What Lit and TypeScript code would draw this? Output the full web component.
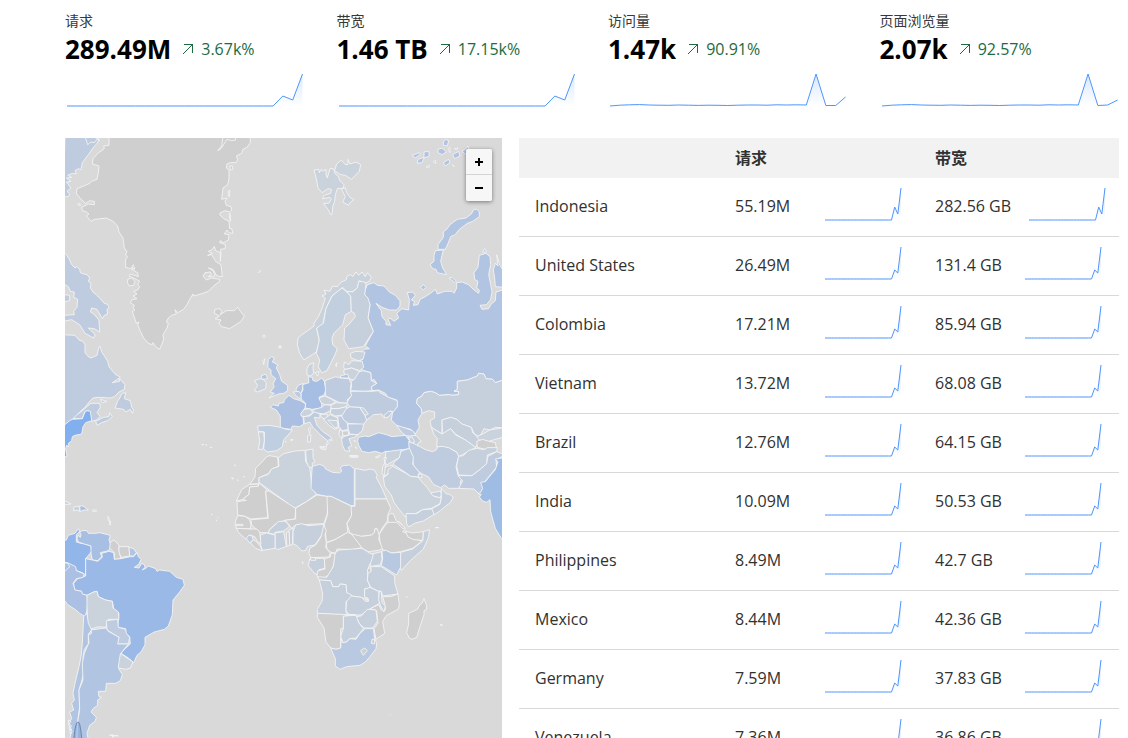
import { LitElement, html, svg, css } from "lit";
import { customElement, property } from "lit/decorators.js";

const NONE = "#cfcfcf";
const PALE = "#cad2dc";
const SOFT = "#c6cfdc";
const LIGHT = "#bfcbde";
const MID = "#b1c4e1";
const DEEP = "#a8bfe3";

type Sheet = { x: number; y: number; shapes: [string, string][] };

// Each sheet holds a part of the world, drawn at three units to the map unit.
const sheets: Sheet[] = [
  { x: 0, y: 0, shapes: [
    [LIGHT, "0,-5 90,-5 102,5 96,16 84,30 70,50 52,74 48,95 40,92 30,98 34,108 22,106 8,112 20,118 4,120 18,130 4,132 18,150 6,160 14,168 10,176 -5,176"],
    [LIGHT, "68,20 78,12 88,14 96,4 104,6 84,-5 60,-5"],
    [NONE, "132,-5 132,22 116,24 118,32 100,45 84,62 82,78 102,84 100,104 96,124 80,130 74,136 56,144 36,152 34,166 48,184 62,196 74,188 88,190 88,200 70,198 50,208 52,218 64,222 72,228 64,234 78,250 88,244 100,243 124,240 144,250 158,264 162,282 174,300 178,330 186,340 182,350 188,358 182,362 182,388 196,392 206,380 200,396 210,388 206,398 218,404 220,416 196,408 192,414 214,424 224,430 218,440 224,446 218,456 206,460 216,468 204,474 216,482 200,486 196,494 208,502 204,510 210,516 202,520 214,556 222,552 218,560 226,580 236,600 250,616 262,620 264,614 272,626 284,634 290,620 296,604 294,590 306,570 310,556 304,552 310,540 320,532 334,528 330,515 338,524 356,514 366,500 374,484 384,468 386,474 394,472 414,466 430,460 448,442 464,430 464,424 440,420 424,426 414,414 420,404 436,402 440,410 430,416 450,414 444,398 430,390 444,394 456,414 472,416 468,380 454,372 448,364 440,350 428,352 442,346 430,340 440,336 448,326 452,338 466,344 466,370 468,350 466,334 480,332 482,320 464,314 466,308 476,314 490,306 492,290 478,288 486,276 492,284 504,286 500,272 494,272 492,250 476,242 464,230 466,224 480,218 494,222 500,216 498,206 484,202 480,190 486,180 470,184 474,150 488,140 492,122 492,96 484,90 486,78 496,74 514,74 518,64 514,54 530,46 534,34 546,28 556,14 556,-5"],
    [NONE, "474,-5 470,24 458,38 468,32 486,4 500,8 512,6 510,-5"],
    [NONE, "494,84 502,84 504,94 496,96"],
    [NONE, "490,160 494,156 494,176 490,174"],
    [NONE, "492,228 496,226 496,250"],
    [NONE, "188,424 200,420 210,430 206,442 194,444 188,436"],
    [NONE, "450,514 464,512 470,520 466,530 484,518 508,518 518,508 526,520 538,534 528,550 510,562 494,572 470,566 462,556 468,546 450,542 464,534 448,526"],
    [NONE, "580,404 587,398"],
    [NONE, "38,198 44,196 46,202 40,202"],
    [LIGHT, "-5,340 4,350 12,362 20,380 30,390 36,386 44,394 46,404 56,408 66,410 74,420 70,430 78,436 76,450 84,462 98,474 118,496 126,498 132,506 126,516 128,528 118,532 112,542 96,514 80,510 76,522 86,528 102,546 104,582 88,572 70,570 90,590 86,600 60,586 44,560 20,545 -5,550 -5,532 28,530 26,520 36,508 38,484 26,478 28,462 16,460 10,446 0,440 -5,440"],
    [LIGHT, "-5,470 14,472 14,488 -5,492"],
    [NONE, "594,592 600,592 600,598 594,598"],
    [NONE, "642,624 648,624 648,630 642,630"],
  ]},
  { x: 0, y: 182, shapes: [
    [LIGHT, "-5,44 30,46 42,60 54,64 60,74 60,98 70,110 78,114 96,106 102,80 106,80 110,96 122,114 128,124 132,140 150,162 166,172 142,188 164,184 164,176 180,194 178,208 162,216 148,230 136,234 100,232 84,234 74,244 60,262 44,276 30,294 -5,318"],
    [LIGHT, "24,296 36,284 50,274 78,250 104,250 106,262 96,278 106,290 94,300 80,304 76,290 70,272 60,274 52,296"],
    [LIGHT, "92,304 116,292 132,290 134,278 142,290 128,302 110,308 96,316"],
    [LIGHT, "172,220 182,218 178,236 196,242 200,262 206,270 202,280 196,268 182,276 176,268 150,264 158,244"],
    [LIGHT, "106,238 126,244 112,248"],
    ["#82afed", "-5,318 14,302 22,298 52,296 60,276 66,272 76,274 80,302 62,308 54,320 50,342 30,346 22,350 20,362 10,370 12,380 4,376 2,388 6,408 -5,412"],
    [PALE, "-5,546 4,544 18,552 -5,554"],
    [SOFT, "26,562 42,558 44,574 34,570 26,572"],
    [DEEP, "44,558 54,558 70,570 54,570 46,576"],
    [SOFT, "82,570 94,570 94,574 84,574"],
    [PALE, "128,590 130,590 134,602 130,602"],
    [PALE, "134,606 137,606 136,610"],
    [PALE, "410,374 416,374"], [PALE, "422,374 426,376"], [PALE, "436,382 441,383"],
    [PALE, "438,584 442,584"], [PALE, "458,592 460,594"], [PALE, "501,472 501,475"],
  ]},
  { x: 0, y: 382, shapes: [
    ["#92b5ea", "-5,62 4,60 10,46 30,40 40,26 44,34 34,44 34,66 48,70 60,72 78,78 80,94 62,116 62,166 52,158 34,152 30,142 -5,126"],
    ["#a7bfe3", "44,36 52,32 66,32 70,40 92,40 104,38 120,42 136,46 132,60 134,66 140,78 130,92 106,98 110,110 98,122 82,120 78,100 78,78 58,72 40,66 36,56 40,46 46,52 48,44"],
    [NONE, "136,66 148,60 162,76 162,92 168,116 148,118 148,98 134,84"],
    [NONE, "162,80 192,80 194,108 168,112 162,96"],
    [MID, "192,82 206,86 214,98 206,108 194,108"],
    ["#9bb9e6", "62,116 82,120 98,124 112,112 110,100 132,94 146,98 148,118 168,116 196,110 206,110 216,98 220,110 228,118 222,132 208,142 222,144 230,130 238,134 240,142 232,150 244,144 250,138 272,146 276,154 284,150 314,154 334,172 354,178 358,196 344,216 324,240 322,284 310,318 298,328 268,336 240,352 240,374 228,396 216,406 206,428 190,414 168,400 180,386 196,372 194,350 182,340 182,326 158,322 162,280 146,266 142,244 122,240 100,230 96,214 86,216 66,226 50,222 50,214 28,210 26,190 38,176 62,168"],
    ["#abc0e2", "-5,126 8,128 32,140 34,152 58,162 54,172 34,176 24,190 30,210 50,214 52,222 66,226 68,246 66,270 60,290 44,280 30,268 8,254 -5,236"],
    ["#abc0e2", "-5,128 8,130 14,140 2,152 -5,154"],
    [PALE, "66,226 86,216 96,214 100,230 122,240 142,244 144,264 160,276 162,298 130,298 122,322 100,320 76,328 68,308 66,256"],
    [LIGHT, "124,302 158,298 160,322 182,328 184,340 194,352 190,372 156,372 162,352 126,330"],
    [PALE, "166,400 204,426 196,444 182,448 160,444 158,430"],
    [MID, "56,290 66,280 70,310 80,330 70,342 70,372 58,388 54,410 56,460 48,490 42,510 44,560 38,606 34,660 14,660 20,630 10,610 20,596 14,576 26,570 20,550 28,540 24,520 30,490 42,440 48,410 52,370"],
    [MID, "78,330 122,324 130,334 162,352 158,372 190,372 166,402 160,440 162,448 172,464 166,482 152,490 124,490 122,514 100,514 102,530 110,532 98,540 98,556 84,566 78,576 94,592 90,604 74,616 66,640 70,660 36,660 38,606 44,570 42,510 54,480 52,430 58,400 72,368 70,346 80,340"],
    [PALE, "10,600 18,604 12,612 20,618 14,626 22,634 16,642"],
    [PALE, "134,646 144,644 142,652 152,646 160,648"],
    [PALE, "134,2 136,8"], [PALE, "132,12 138,14"], [PALE, "453,1 456,1"],
  ]},
  { x: 217, y: 0, shapes: [
    [PALE, "96,96 110,94 112,104 118,94 122,100 132,94 132,110 136,120 144,92 154,92 160,108 170,116 172,126 186,140 184,150 166,152 160,170 158,190 152,206 150,230 146,230 138,214 124,196 140,196 148,184 144,178 122,182 126,172 146,166 148,154 138,152 120,164 108,150 104,126 100,110"],
    [PALE, "158,98 164,78 178,66 190,80 198,80 198,64 204,78 222,72 236,80 232,100 208,124 190,112 176,110 160,100"],
    [PALE, "178,152 190,150 194,164 206,180 216,184 204,194 200,202 182,192 190,176"],
    [MID, "390,52 412,44 416,48 400,60"],
    [MID, "426,42 440,40 442,54 432,58 426,60 420,74 406,76 408,64 426,58"],
    [MID, "484,12 490,4 500,8 496,24 484,22"],
    [MID, "468,34 480,30 494,42 480,50 468,44"],
    [MID, "512,50 530,40 534,54 518,62"],
    [MID, "540,40 552,32 558,24 562,40 550,48"],
    [MID, "454,72 460,66 462,76"],
    [MID, "484,74 500,64 504,74 490,84"],
    [MID, "432,86 442,82 440,90"], [MID, "498,32 504,28 504,44"], [MID, "518,32 528,30 524,36"], [MID, "512,80 516,86"],
    [MID, "576,214 584,214 592,222 592,236 572,250 556,256 548,262 530,276 520,290 506,296 500,312 490,334 468,334 468,320 484,298 484,282 496,272 504,260 526,244 552,240 568,228"],
    [MID, "460,338 484,336 480,352 476,370 482,390 494,410 466,404 462,394 452,392 444,380 456,370 456,352"],
    [MID, "416,448 424,440 432,448 424,456"],
    [MID, "502,420 510,418 522,430 518,434"],
    [MID, "602,342 608,332 614,342"],
    [MID, "634,396 640,376 648,384 644,350 652,378 660,392 670,380 670,448 640,446 638,420"],
    [MID, "248,460 256,440 276,434 286,442 306,444 322,462 340,472 354,488 354,504 344,516 322,516 300,508 282,496 298,518 300,536 312,550 312,560 326,562 318,544 324,540 336,550 350,540 344,526 360,512 380,516 382,486 376,464 392,462 400,472 388,486 398,490 394,502 408,500 414,484 430,476 448,464 460,454 466,468 488,460 510,460 516,466 524,450 524,434 540,432 560,440 576,456 590,466 592,456 584,450 588,430 578,424 576,404 588,388 592,352 612,346 624,356 626,380 620,410 626,440 630,462 626,484 614,500 594,502 600,514 620,512 626,500 640,488 642,462 670,454 670,724 640,734 632,724 612,722 606,708 590,706 586,714 556,726 526,730 526,754 516,760 530,760 530,770 512,772 502,770 472,772 460,764 446,760 426,764 420,774 406,782 404,796 418,812 420,826 408,846 412,868 400,888 386,874 360,868 344,862 328,846 332,822 346,806 344,786 318,778 310,766 290,756 270,758 268,746 284,736 276,724 268,728 266,704 240,696 236,660 238,642 246,634 262,632 250,624 274,580 258,540 264,500 248,470"],
    [PALE, "48,600 60,590 80,576 96,564 96,556 108,538 120,512 130,480 120,474 132,468 126,456 144,460 152,444 166,446 178,432 192,426 196,414 206,410 212,416 222,402 230,412 240,402 250,416 256,404 268,418 262,430 248,436 232,428 226,450 210,462 194,460 182,448 150,474 132,512 122,560 104,570 112,610 103,642 91,650 65,666 53,646 46,620"],
    ["#c2cfde", "132,512 150,474 180,450 194,462 206,474 208,520 190,530 182,560 156,586 150,600 152,620 166,632 160,648 146,676 135,698 119,704 109,686 113,666 103,646 112,606 104,570 124,556"],
    [SOFT, "194,460 212,462 226,450 230,430 248,432 252,440 248,470 258,480 264,500 258,540 274,580 244,626 200,632 186,606 188,570 200,560 220,536 218,526 208,520 206,474"],
  ]},
  { x: 160, y: 202, shapes: [
    [PALE, "376,40 392,34 420,36 414,58 400,62 378,54"],
    [PALE, "356,82 358,66 372,74 380,62 412,64 416,82 404,92 380,84 360,88"],
    [PALE, "356,90 380,84 404,94 400,108 386,120 372,116 358,102"],
    [LIGHT, "378,124 388,118 402,96 414,92 437,98 439,122 455,130 439,140 441,152 420,154 376,152 380,140"],
    [MID, "346,108 368,102 372,114 348,114"],
    [LIGHT, "300,122 332,110 346,114 372,116 378,130 376,150 380,166 366,180 370,190 344,188 320,176 302,168 300,148"],
    ["#a7bee4", "250,110 262,112 264,122 276,124 290,114 298,124 302,150 298,164 282,172 290,190 290,204 262,208 240,204 242,190 228,176 228,160 234,150 232,134 252,128"],
    [PALE, "246,86 252,74 266,68 264,84 266,100 256,108 246,104"], [PALE, "270,98 282,94 278,108"],
    [MID, "212,150 220,136 234,130 232,150 226,162"], [LIGHT, "204,156 222,154 228,162 228,178 216,170"],
    ["#aabfe1", "166,264 166,228 154,210 136,202 144,194 160,198 162,190 176,188 178,180 192,166 206,176 226,182 242,192 240,204 228,220 234,230 236,252 224,260 202,258 198,268 184,266"],
    ["#bfcee0", "98,258 132,256 166,262 184,268 202,270 192,282 176,300 172,320 156,332 126,336 116,326 118,300 118,276 100,274"],
    [PALE, "100,276 116,276 118,300 114,328 100,328 104,302"],
    [MID, "130,58 140,50 148,54 142,66 158,74 154,84 164,104 170,124 188,136 188,152 176,160 160,162 132,174 148,160 136,156 148,140 144,132 152,116 138,104 138,90 128,82"],
    [PALE, "104,116 114,118 124,128 122,146 98,156 88,152 98,136 88,122"], [MID, "108,108 122,102 128,116 112,118"],
    [PALE, "114,62 120,56 116,74"], [PALE, "162,20 168,20"], [PALE, "332,74 336,68 334,80"],
    [PALE, "228,220 238,208 254,206 264,218 252,226 240,230 228,228"],
    [LIGHT, "262,210 290,202 300,194 320,196 316,212 296,222 270,218"],
    [PALE, "282,174 300,168 320,178 332,186 318,194 300,194 288,188"],
    [PALE, "318,196 334,188 368,190 364,200 340,206 318,206"],
    [SOFT, "318,206 340,206 364,200 364,214 350,226 330,228 316,220"],
    [LIGHT, "236,230 254,228 268,216 286,222 284,234 268,232 276,256 292,274 316,290 322,302 312,298 312,308 304,318 308,302 288,286 264,262 254,246 238,252"],
    [LIGHT, "284,320 304,320 302,330 288,326"], [PALE, "248,286 258,284 256,306 248,306"], [MID, "250,266 256,262 254,280"],
    [PALE, "196,300 204,298 202,302"], [PALE, "180,304 184,306"],
    [PALE, "284,224 306,222 308,236 294,236"], [SOFT, "296,238 316,224 338,234 342,262 330,268 312,256"],
    [PALE, "308,240 336,242 340,260 330,264"],
    [LIGHT, "338,228 350,228 366,246 370,268 352,272 342,260"], [PALE, "344,268 354,276 350,296 342,284"], [NONE, "352,274 368,272 372,284 354,288"],
    [LIGHT, "350,228 364,206 376,200 404,202 420,222 425,240 415,254 370,250 356,240"],
    [LIGHT, "368,252 416,252 412,272 398,284 374,282 370,266"],
    [LIGHT, "376,154 441,154 461,152 465,158 491,172 517,182 517,200 503,218 497,212 487,232 475,232 471,222 445,224 436,232 425,240 418,222 404,202 376,200 366,190 370,180 380,166"],
    [LIGHT, "477,226 491,214 503,214 491,230 479,234"],
    [PALE, "404,202 416,204 430,222 420,226"],
    [LIGHT, "350,298 356,290 376,284 400,284 388,292 372,296 380,318 370,322 374,334 360,332 352,314"],
    [PALE, "374,348 400,348 398,352 376,352"], [PALE, "386,302 392,304"], [PALE, "392,320 394,326"], [PALE, "451,352 465,346 459,354"],
    ["#a9bfe2", "400,292 420,288 431,290 461,278 485,284 501,290 541,286 553,302 553,326 527,330 507,336 481,334 471,340 451,334 431,338 411,334 402,318 398,304"],
  ]},
  { x: 297, y: 202, shapes: [
    [LIGHT, "104,256 130,264 152,272 162,286 150,292 130,286 118,276"],
    [SOFT, "140,288 162,286 178,304 170,308 164,320 150,306 142,300"],
    [SOFT, "140,296 150,290 158,306 148,310"],
    [SOFT, "430,118 400,128 392,118 372,116 366,102 350,100 346,108 316,120 286,124 286,148 276,154 290,154 290,164 272,166 262,164 232,166 220,158 206,154 186,158 180,168 166,176 164,190 178,206 180,220 200,212 218,216 218,234 204,242 208,262 240,282 240,240 266,232 284,238 300,252 328,262 336,280 352,292 366,266 384,270 400,262 430,264"],
    [SOFT, "242,282 240,240 266,232 284,238 300,252 328,262 332,278 346,290 360,284 372,292 354,302 340,322 310,300 280,282 266,266 246,282"],
    [PALE, "208,262 224,272 240,282 266,266 280,284 310,300 342,322 320,334 290,350 284,336 260,324 224,320 226,296 216,284"],
    [PALE, "344,290 362,282 384,270 430,262 430,290 400,298 380,304 352,300"],
    [NONE, "344,304 362,298 380,304 400,308 404,328 376,330 346,322"],
  ]},
  { x: 297, y: 307, shapes: [
    [LIGHT, "142,10 140,-10 156,-4 176,6 190,14 212,20 224,14 226,6 240,4 260,8 284,22 290,34 282,66 288,90 300,100 294,112 298,120 290,130 260,130 248,120 236,128 214,118 200,96 180,86 170,80 154,60 152,36"],
    [SOFT, "290,34 304,32 320,16 346,10 366,14 376,8 406,8 404,20 376,30 374,56 356,72 330,92 290,90 284,62"],
    [LIGHT, "288,92 330,92 356,72 374,56 378,34 404,20 430,30 402,44 404,66 388,86 370,108 366,138 352,148 336,132 290,130 302,108"],
    ["#9fbde4", "430,38 400,42 408,50 400,74 388,88 370,110 356,112 362,130 356,142 348,146 358,148 352,156 362,168 374,172 384,164 386,200 400,250 418,280 430,290"],
    [LIGHT, "114,20 142,10 154,36 152,58 172,82 168,96 146,94 130,82 94,58 96,52 112,38"],
    [PALE, "72,20 118,14 112,38 74,60 68,50"],
    [NONE, "70,66 92,60 94,72 74,88 64,98"], [PALE, "62,66 70,50 68,92 60,86"], [PALE, "66,38 74,38 68,50"],
    [PALE, "64,98 78,88 78,74 92,64 130,84 146,94 168,96 186,118 196,128 204,140 216,154 238,158 234,176 208,190 182,194 160,206 136,206 130,216 122,206 112,194 96,172 88,150 68,124"],
    [LIGHT, "168,88 178,88 180,98 172,98"],
    [SOFT, "206,144 236,138 238,150 234,158 212,152"],
    [SOFT, "238,130 252,146 262,148 274,156 266,172 250,184 236,196 216,210 208,192 234,178 238,160"],
    [SOFT, "132,206 164,206 182,194 210,192 216,208 184,228 160,234 140,246 134,236"],
    [PALE, "220,248 230,248"],
  ]},
  { x: 160, y: 307, shapes: [
    [NONE, "124,36 132,32 158,36 160,64 140,72 130,86 102,98 102,116 74,118 90,96 92,70 114,48"],
    [NONE, "74,118 100,118 100,124 74,126 72,148 52,164 34,168 50,134"],
    [PALE, "160,38 176,26 210,18 240,16 242,50 254,66 258,100 260,124 274,148 244,170 212,188 200,186 190,176 102,112 102,98 130,88 140,72 162,64"],
    [PALE, "242,16 264,12 264,38 270,50 262,54 262,70 250,64 244,48"],
    ["#b9c9e1", "262,64 284,58 298,64 302,72 322,82 344,84 350,78 346,68 354,62 374,60 388,72 388,182 378,182 318,154 304,154 276,148 258,130 260,90"],
    ["#c8d2de", "390,70 420,76 436,72 449,76 457,92 453,96 471,130 485,162 390,162"],
    [NONE, "36,170 64,166 52,164 72,148 74,126 100,124 102,114 130,138 122,138 128,218 78,222 60,214 38,210"],
    [NONE, "122,138 132,138 190,176 212,190 210,222 180,226 150,238 134,254 130,264 104,262 80,240 78,224 130,220"],
    [NONE, "212,190 244,170 276,150 304,154 312,160 306,210 296,236 212,240 200,250 190,236 180,226 212,222"],
    [NONE, "306,154 318,154 380,184 380,212 366,234 368,262 330,284 304,292 302,268 296,244 308,208"],
    [NONE, "378,184 390,184 390,162 485,162 497,190 489,208 487,228 471,250 461,272 455,250 449,252 449,262 440,270 411,274 390,276 374,262 366,236 380,212"],
    [NONE, "376,266 411,274 440,270 449,262 449,252 457,252 463,272 461,284 475,310 460,316 430,320 411,310 390,290"],
    [NONE, "304,294 330,284 368,262 380,268 411,308 380,314 336,312 332,324 318,322 306,312"],
    [SOFT, "204,296 204,260 212,240 230,236 250,242 296,238 300,258 286,276 270,300 248,304 242,316 230,318 216,302"],
    [NONE, "296,240 304,256 300,270 304,292 302,308 316,324 312,336 258,338 252,326 254,310 272,300 288,276"],
    [SOFT, "192,254 204,250 202,300 194,300"], [NONE, "184,262 192,260 194,300 186,304"],
    [SOFT, "150,264 176,260 184,304 158,314 150,308"], [SOFT, "106,270 124,264 150,270 150,310 112,316 106,296"],
    [SOFT, "134,254 160,230 180,228 194,244 176,258 150,262 148,268 130,264"],
    [NONE, "38,212 60,214 74,224 78,240 76,252 34,250 30,234"], [NONE, "32,238 54,238 54,242 32,242"],
    [NONE, "34,250 76,252 96,252 104,262 108,296 98,290 90,276 76,270 62,282 40,262"],
    [LIGHT, "64,280 72,270 82,274 84,284 74,294"], [NONE, "76,294 86,284 96,292 106,304 112,318 92,310"],
    [SOFT, "254,342 274,340 298,340 300,370 282,374 276,390 264,380 250,362"], [NONE, "256,338 272,338 272,346 258,346"],
    [NONE, "298,342 316,336 318,324 332,326 326,360 316,384 300,398 280,400 276,390 278,378 300,372"],
    [PALE, "232,350 234,356"], [PALE, "28,60 32,62"], [PALE, "22,102 26,100"], [PALE, "36,104 40,106"], [PALE, "56,96 60,94"],
    [PALE, "286,8 300,8 298,14"], [PALE, "374,32 398,32 396,36"],
  ]},
  { x: 297, y: 307, shapes: [
    [NONE, "82,230 112,230 130,252 122,260 132,264 150,280 180,288 152,310 116,320 88,324 62,314 54,290 52,268 70,240"],
    [NONE, "86,206 94,206 102,226 128,246 124,252 104,232 78,232 78,212"],
    [SOFT, "184,260 202,254 200,276 184,312 146,346 118,376 114,366 116,322 152,312 182,288"],
    [NONE, "130,258 150,264 184,260 182,286 156,284 138,276"],
    ["#b7c8e0", "60,318 72,316 88,324 116,322 116,366 104,390 58,362 62,340"],
    [SOFT, "28,328 58,320 60,344 54,360 26,364 24,346"],
  ]},
  { x: 215, y: 422, shapes: [
    [SOFT, "164,-10 166,-22 178,-30 246,-35 270,-20 280,-16 274,4 266,20 264,34 262,60 272,84 254,86 254,112 266,122 244,112 214,108 200,98 198,74 180,72 176,80 158,80 152,62 118,60 112,50 140,52 160,20"],
    [NONE, "262,28 272,22 274,36 264,46"],
    [SOFT, "118,60 152,62 158,80 176,80 180,72 198,74 200,98 214,104 214,122 198,124 198,158 206,166 112,160 112,148 126,124 128,100"],
    [SOFT, "200,124 214,108 244,112 256,124 266,124 264,114 254,112 254,88 270,82 296,94 298,130 268,148 244,164 228,166 204,162 198,150"],
    [SOFT, "264,40 274,34 272,20 304,20 344,48 344,68 354,102 308,108 304,94 296,94 272,82 262,60"],
    [NONE, "308,110 332,110 354,102 358,136 354,148 320,166 308,184 314,220 288,238 282,206 294,190 290,152 270,146 296,134 304,150 316,150 314,130"],
    [SOFT, "298,92 304,96 306,128 316,138 312,156 302,138 296,120"],
    [SOFT, "228,170 244,168 262,148 288,150 292,184 278,204 252,204 238,190"],
    [SOFT, "190,168 228,166 236,188 250,206 228,234 208,236 200,246 188,248 182,230 190,206"],
    [NONE, "112,160 204,164 228,164 190,168 190,204 182,206 182,264 168,268 152,264 138,246 132,204 112,172"],
    ["#b9c9e1", "152,264 168,268 182,264 184,236 188,248 200,246 210,236 228,238 240,220 256,206 280,206 284,236 290,250 288,266 270,290 256,306 240,316 200,320 180,328 166,318 166,296"],
    [NONE, "242,272 254,264 262,272 250,286"], [NONE, "276,238 284,238 284,252 274,250"],
    [NONE, "432,116 440,136 440,148 432,152 432,164 420,200 410,232 396,238 388,234 380,218 386,192 386,160 412,148 420,134 426,130"],
    [PALE, "378,108 382,112"], [PALE, "480,194 488,196"], [PALE, "330,464 332,466"],
  ]},
];

const flat = (n: number, y: number) => Array.from({ length: n }, () => y);
const surge = [...flat(22, 35), 25, 29, 3];
const wave = [35, 34.2, 33.8, 33.6, 34, 34.2, 34.3, 34, 34.2, 34.4, 34.2, 34.3, 34.5, 34.2, 34, 34, 34.2, 33.8, 34, 33.8, 34];
const stats = [
  { label: "请求", value: "289.49M", change: "3.67k%", ys: surge },
  { label: "带宽", value: "1.46 TB", change: "17.15k%", ys: surge },
  { label: "访问量", value: "1.47k", change: "90.91%", ys: [...wave, 3, 34.5, 34.5, 26] },
  { label: "页面浏览量", value: "2.07k", change: "92.57%", ys: [...wave, 3, 34.5, 34, 29] },
];

const rows = [
  ["Indonesia", "55.19M", "282.56 GB"],
  ["United States", "26.49M", "131.4 GB"],
  ["Colombia", "17.21M", "85.94 GB"],
  ["Vietnam", "13.72M", "68.08 GB"],
  ["Brazil", "12.76M", "64.15 GB"],
  ["India", "10.09M", "50.53 GB"],
  ["Philippines", "8.49M", "42.7 GB"],
  ["Mexico", "8.44M", "42.36 GB"],
  ["Germany", "7.59M", "37.83 GB"],
  ["Venezuela", "7.36M", "36.86 GB"],
];

@customElement("spark-line")
class SparkLine extends LitElement {
  @property({ attribute: false }) ys: number[] = [];
  @property({ type: Number }) w = 240;
  @property({ type: Number }) h = 38;

  static styles = css`
    :host { display: block; }
    .chart { display: block; width: 100%; height: 100%; }
    .line { fill: none; stroke: #4e95fb; stroke-width: 1; vector-effect: non-scaling-stroke; }
  `;

  render() {
    const step = (this.w - 4) / (this.ys.length - 1);
    const pts = this.ys.map((y, i) => `${(2 + i * step).toFixed(1)},${y}`).join(" ");
    const base = Math.max(...this.ys);
    return html`<svg class="chart" viewBox="0 0 ${this.w} ${this.h}" preserveAspectRatio="none" aria-hidden="true">
      <defs><linearGradient id="fade" x1="0" y1="0" x2="0" y2="1">
        <stop offset="0" stop-color="#4e95fb" stop-opacity="0.22"></stop>
        <stop offset="1" stop-color="#4e95fb" stop-opacity="0"></stop>
      </linearGradient></defs>
      <polygon fill="url(#fade)" points="2,${base} ${pts} ${this.w - 2},${base}"></polygon>
      <polyline class="line" points=${pts}></polyline>
    </svg>`;
  }
}

@customElement("world-map")
class WorldMap extends LitElement {
  static styles = css`
    :host { display: block; position: relative; background: #d9d9d9; overflow: hidden; }
    .map { display: block; width: 100%; aspect-ratio: 437 / 600; }
    .land { stroke: #f4f4f4; stroke-width: 2.6; stroke-linejoin: round; }
    .ring { fill: #7da3dc; fill-opacity: 0.5; stroke: #6f86ab; stroke-width: 3; }
    .zoom { position: absolute; top: 11px; right: 10px; width: 26px; border-radius: 2px; box-shadow: 0 1px 4px rgba(0, 0, 0, 0.45); overflow: hidden; }
    .btn { display: grid; place-items: center; box-sizing: border-box; width: 100%; height: 26px; padding: 0; border: 0; background: #f7f7f7; cursor: pointer; }
    .btn:first-child { border-bottom: 1px solid #d4d4d4; }
    .sign { display: block; fill: none; stroke: #000; stroke-width: 2; }
  `;

  render() {
    return html`
      <svg class="map" viewBox="0 0 437 600" preserveAspectRatio="xMinYMin slice" role="img" aria-label="World">
        ${sheets.map((s) => svg`<g transform="translate(${s.x} ${s.y}) scale(0.33333)">
          ${s.shapes.map(([fill, points]) => svg`<polygon class="land" fill=${fill} points=${points}></polygon>`)}
        </g>`)}
        <g transform="translate(0 382) scale(0.33333)"><path class="ring" d="M26 662C30 620 34 606 39 606S47 622 51 662"></path></g>
      </svg>
      <div class="zoom">
        <button class="btn" aria-label="Zoom in"><svg class="sign" width="8" height="8" viewBox="0 0 8 8"><path d="M4 0V8M0 4H8"></path></svg></button>
        <button class="btn" aria-label="Zoom out"><svg class="sign" width="8" height="8" viewBox="0 0 8 8"><path d="M0 4H8"></path></svg></button>
      </div>`;
  }
}

@customElement("app-root")
class AppRoot extends LitElement {
  static styles = css`
    :host { display: block; height: 100vh; overflow: hidden; box-sizing: border-box; padding: 11px 9px 0 65px; background: #fff; color: #313131; font: 16px/20px "Open Sans", "Noto Sans CJK SC", sans-serif; }
    .stats { display: grid; grid-template-columns: repeat(4, minmax(0, 1fr)); gap: 32px; margin-bottom: 29px; }
    .label { font-size: 14px; line-height: 20px; color: #36393a; }
    .figures { display: flex; align-items: center; gap: 10px; height: 36px; margin-bottom: 4px; white-space: nowrap; }
    .value { font-size: 26px; font-weight: 700; color: #000; }
    .change { display: flex; align-items: center; gap: 6px; color: #1d6b3f; }
    .arrow { display: block; fill: none; stroke: currentColor; stroke-width: 1; }
    .trend { height: 38px; }
    .split { display: grid; grid-template-columns: minmax(0, 1fr) 600px; gap: 17px; align-items: start; }
    .table { width: 100%; border-collapse: collapse; table-layout: fixed; }
    .table th { height: 40px; padding: 0 16px; background: #f2f2f2; font-size: 16px; font-weight: 700; text-align: left; }
    .table td { padding: 8px 16px 10px; border-bottom: 1px solid #d9d9d9; white-space: nowrap; }
    .cell { display: flex; align-items: center; justify-content: space-between; gap: 16px; }
    .mini { flex: none; width: 80px; height: 40px; }
  `;

  render() {
    const first = [...flat(22, 34), 21, 28, 2];
    const rest = [...flat(22, 34), 25, 28, 2];
    return html`
      <section class="stats">
        ${stats.map((s) => html`<div>
          <div class="label">${s.label}</div>
          <div class="figures">
            <span class="value">${s.value}</span>
            <span class="change"><svg class="arrow" width="14" height="14" viewBox="0 0 14 14"><path d="M2 12L12 2M3 2.5H11.500V11"></path></svg>${s.change}</span>
          </div>
          <spark-line class="trend" .ys=${s.ys}></spark-line>
        </div>`)}
      </section>
      <section class="split">
        <world-map></world-map>
        <table class="table">
          <thead><tr><th></th><th>请求</th><th>带宽</th></tr></thead>
          <tbody>
            ${rows.map((r, i) => html`<tr>
              <td>${r[0]}</td>
              ${[r[1], r[2]].map((v) => html`<td><div class="cell"><span>${v}</span><spark-line class="mini" .w=${80} .h=${40} .ys=${i ? rest : first}></spark-line></div></td>`)}
            </tr>`)}
          </tbody>
        </table>
      </section>`;
  }
}
